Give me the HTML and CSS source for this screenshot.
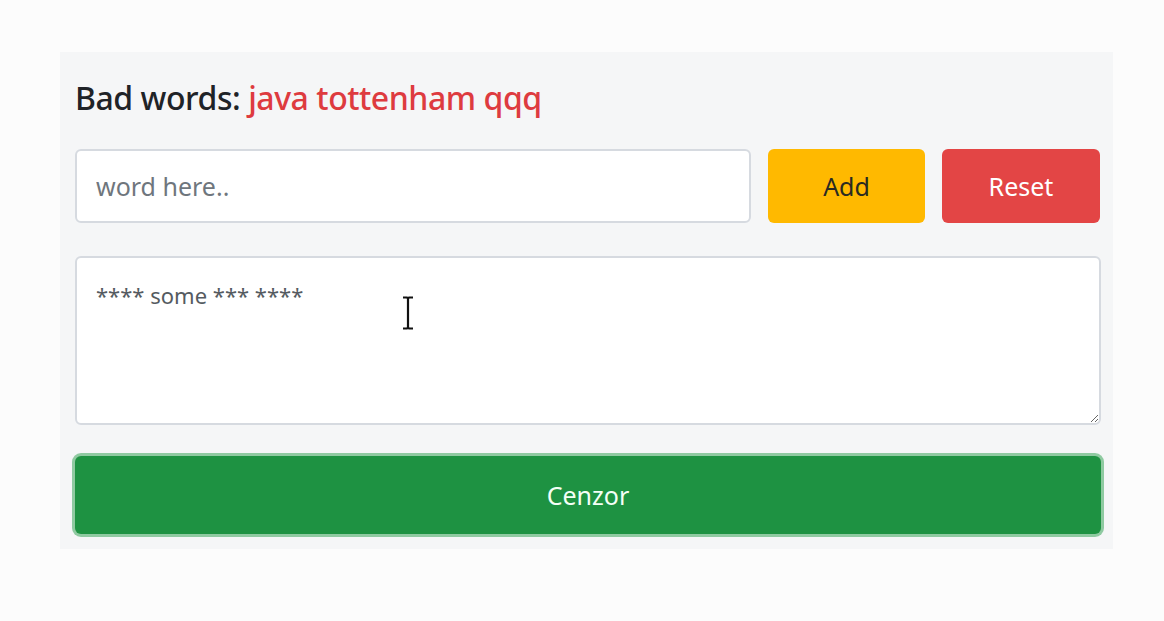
FILE: index.html
```html
<!DOCTYPE html>
<html>
<head>
<meta charset="utf-8">
<link rel="stylesheet" href="styles.css">
</head>
<body>
<div class="page">
  <div class="card">
    <h2 class="title">Bad words: <span class="bad">java tottenham qqq</span></h2>
    <div class="row">
      <input class="field" type="text" placeholder="word here..">
      <button class="btn btn-add">Add</button>
      <button class="btn btn-reset">Reset</button>
    </div>
    <div class="area-wrap">
      <textarea class="area">**** some *** ****</textarea>
      <svg class="ibeam" width="14" height="34" viewBox="0 0 14 34"><path d="M2 1.5h4l1 1 1-1h4M7 2.5v29M2 32.5h4l1-1 1 1h4" fill="none" stroke="#111" stroke-width="2.2"/></svg>
    </div>
    <button class="btn btn-go">Cenzor</button>
  </div>
</div>
</body>
</html>
```
FILE: styles.css
```css
html, body {
  margin: 0;
  padding: 0;
  background: #fcfcfc;
  font-family: "Noto Sans", "Open Sans", sans-serif;
}
.page {
  padding: 52px 50px 0 60px;
}
.card {
  width: 1053px;
  box-sizing: border-box;
  background: #f5f6f7;
  padding: 24px 13px 15px 15px;
  display: flex;
  flex-direction: column;
}
.title {
  margin: 0 0 29px 0;
  font-size: 32px;
  font-weight: 500;
  color: #1f2327;
  line-height: 44px;
  letter-spacing: -0.45px;
}
.bad {
  color: #de3b3f;
}
.row {
  display: flex;
  gap: 17px;
  height: 74px;
  margin-bottom: 33px;
}
.field {
  flex: 1;
  box-sizing: border-box;
  border: 2px solid #d6dae0;
  border-radius: 6px;
  background: #fff;
  padding: 0 19px;
  font-family: inherit;
  font-size: 25px;
  color: #333;
  outline: none;
}
.field::placeholder {
  color: #6f767d;
}
.btn {
  border: none;
  border-radius: 6px;
  font-family: inherit;
  font-size: 25px;
  cursor: pointer;
}
.btn-add {
  width: 157px;
  background: #ffb900;
  color: #2a2a22;
}
.btn-reset {
  width: 158px;
  background: #e34545;
  color: #fff;
}
.area-wrap {
  position: relative;
  margin-bottom: 31px;
}
.area {
  display: block;
  width: 1026px;
  height: 169px;
  box-sizing: border-box;
  border: 2px solid #d6dae0;
  border-radius: 6px;
  background: #fff;
  padding: 22px 19px;
  font-family: inherit;
  font-size: 22px;
  color: #555b61;
  resize: vertical;
  outline: none;
}
.ibeam {
  position: absolute;
  left: 326px;
  top: 40px;
}
.btn-go {
  width: 1026px;
  height: 78px;
  background: #1e9242;
  color: #f4fff6;
  box-shadow: 0 0 0 3px #8fcaa1;
}
```
